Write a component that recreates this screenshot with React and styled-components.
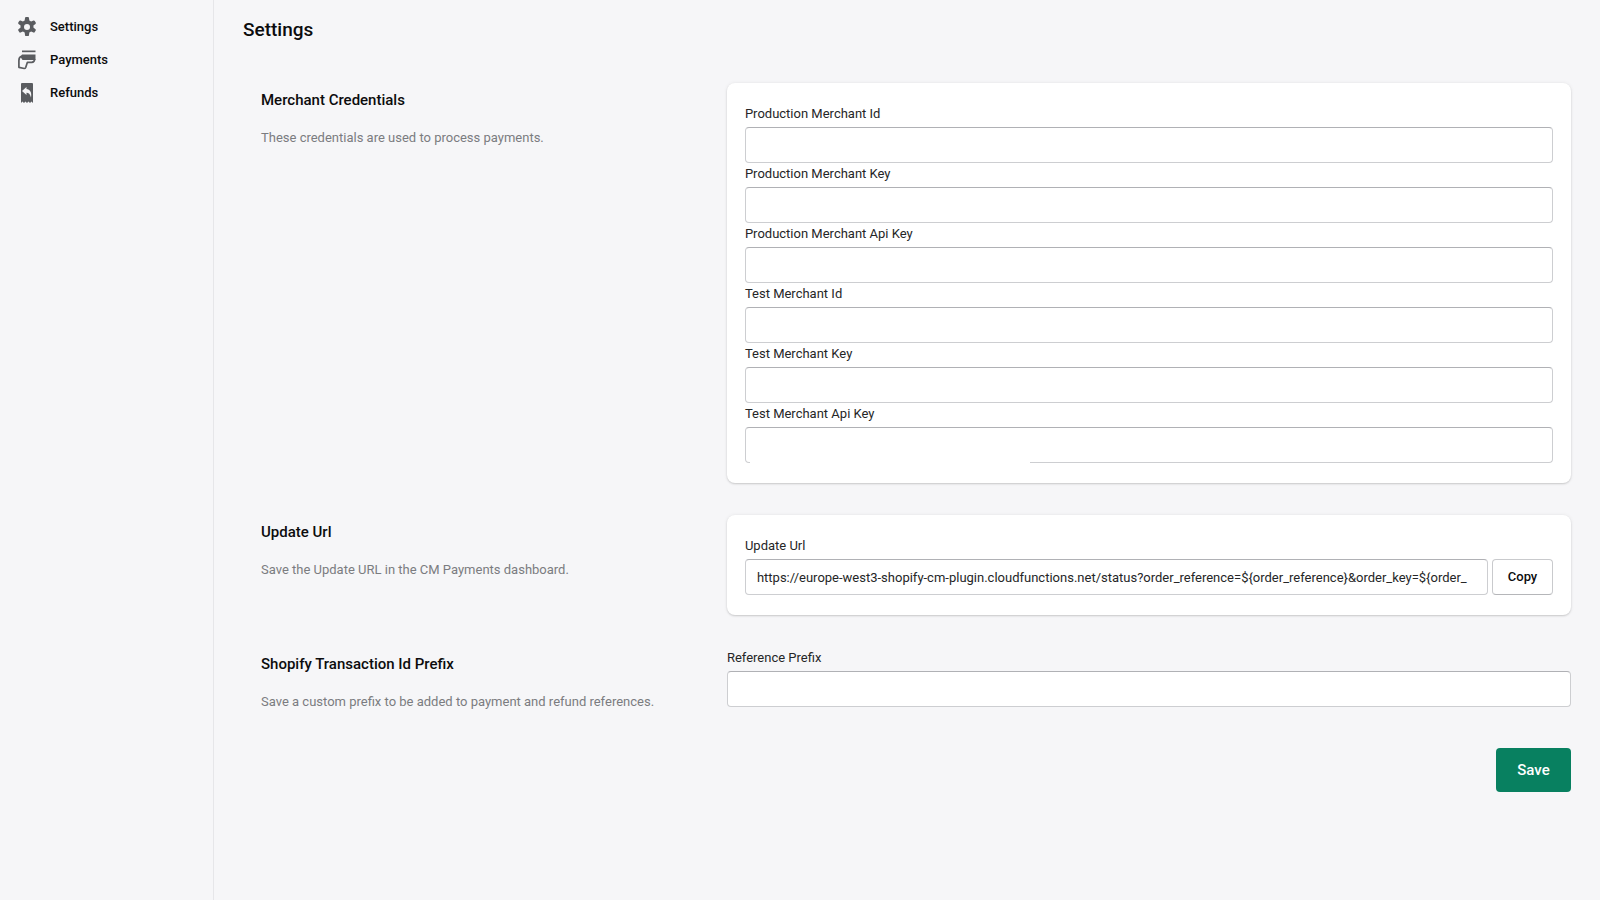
import React, { useState } from "react";
import styled, { createGlobalStyle } from "styled-components";

const NAV_ITEMS = [
  { label: "Settings", Icon: SettingsIcon },
  { label: "Payments", Icon: PaymentsIcon },
  { label: "Refunds", Icon: RefundsIcon },
];

const CREDENTIALS = [
  { id: "prodMerchantId", label: "Production Merchant Id" },
  { id: "prodMerchantKey", label: "Production Merchant Key" },
  { id: "prodMerchantApiKey", label: "Production Merchant Api Key" },
  { id: "testMerchantId", label: "Test Merchant Id" },
  { id: "testMerchantKey", label: "Test Merchant Key" },
  { id: "testMerchantApiKey", label: "Test Merchant Api Key", masked: true },
];

const UPDATE_URL =
  "https://europe-west3-shopify-cm-plugin.cloudfunctions.net/status?order_reference=${order_reference}&order_key=${order_";

function SettingsIcon() {
  return (
    <svg viewBox="0 0 20 20" aria-hidden="true">
      <path
        fillRule="evenodd"
        d="M9.027 0a1 1 0 0 0-.99.859l-.37 2.598a6.993 6.993 0 0 0-1.742 1.01l-2.437-.98a1 1 0 0 0-1.239.428l-.973 1.686a1 1 0 0 0 .25 1.286l2.067 1.62a7.067 7.067 0 0 0 0 2.013l-2.067 1.62a1 1 0 0 0-.25 1.286l.973 1.686a1 1 0 0 0 1.239.428l2.437-.98a6.993 6.993 0 0 0 1.742 1.01l.37 2.598a1 1 0 0 0 .99.859h1.946a1 1 0 0 0 .99-.859l.37-2.598a6.996 6.996 0 0 0 1.742-1.01l2.437.98a1 1 0 0 0 1.239-.428l.973-1.686a1 1 0 0 0-.25-1.286l-2.067-1.62a7.067 7.067 0 0 0 0-2.013l2.067-1.62a1 1 0 0 0 .25-1.286l-.973-1.686a1 1 0 0 0-1.239-.428l-2.437.98a6.993 6.993 0 0 0-1.742-1.01l-.37-2.598a1 1 0 0 0-.99-.859h-1.946zm.973 13a3 3 0 1 0 0-6 3 3 0 0 0 0 6z"
      />
    </svg>
  );
}

function PaymentsIcon() {
  return (
    <svg viewBox="0 0 20 20" aria-hidden="true">
      <path d="M5 .5h13.500v1.700H5z" />
      <path d="M5 4.500h13.500v5.500H5.500L3.500 7z" />
      <path
        d="M5 6C3 6.500 1.900 8 1.900 10.500v6.800l5.400 1.200q1 0 1.400-1l1.700-5.200h4.300q2.900 0 2.900-3.300"
        fill="none"
        stroke="#5a5c60"
        strokeWidth="1.700"
        strokeLinejoin="round"
      />
    </svg>
  );
}

function RefundsIcon() {
  return (
    <svg viewBox="0 0 20 20" aria-hidden="true">
      <path
        fillRule="evenodd"
        d="M5 0h10a1 1 0 0 1 1 1v19l-1.500-1.500L13 20l-1.500-1.500L10 20l-1.500-1.500L7 20l-1.500-1.500L4 20V1a1 1 0 0 1 1-1zM9.500 4 5 8l4.500 4V9.700c2.200 0 3.500 1.300 4.500 4.800 1-5-1-8.200-4.500-8.400z"
      />
    </svg>
  );
}

export default function App() {
  const [values, setValues] = useState({});

  const setValue = (id) => (e) =>
    setValues((prev) => ({ ...prev, [id]: e.target.value }));

  return (
    <>
      <GlobalStyle />
      <Layout>
        <Sidebar>
          {NAV_ITEMS.map(({ label, Icon }) => (
            <NavLink href="#" key={label}>
              <Icon />
              {label}
            </NavLink>
          ))}
        </Sidebar>

        <Main>
          <PageTitle>Settings</PageTitle>
          <Form onSubmit={(e) => e.preventDefault()}>
            <Section>
              <Annotation>
                <h2>Merchant Credentials</h2>
                <p>These credentials are used to process payments.</p>
              </Annotation>
              <Card>
                {CREDENTIALS.map(({ id, label, masked }) => (
                  <Field key={id}>
                    <Label htmlFor={id}>{label}</Label>
                    <InputWrap $masked={masked}>
                      <Input
                        id={id}
                        type="text"
                        value={values[id] ?? ""}
                        onChange={setValue(id)}
                      />
                    </InputWrap>
                  </Field>
                ))}
              </Card>
            </Section>

            <Section>
              <Annotation>
                <h2>Update Url</h2>
                <p>Save the Update URL in the CM Payments dashboard.</p>
              </Annotation>
              <Card>
                <Label htmlFor="updateUrl">Update Url</Label>
                <CopyRow>
                  <Input id="updateUrl" type="text" value={UPDATE_URL} readOnly />
                  <CopyButton
                    type="button"
                    onClick={() => navigator.clipboard?.writeText(UPDATE_URL)}
                  >
                    Copy
                  </CopyButton>
                </CopyRow>
              </Card>
            </Section>

            <Section>
              <Annotation>
                <h2>Shopify Transaction Id Prefix</h2>
                <p>Save a custom prefix to be added to payment and refund references.</p>
              </Annotation>
              <Field>
                <Label htmlFor="referencePrefix">Reference Prefix</Label>
                <Input
                  id="referencePrefix"
                  type="text"
                  value={values.referencePrefix ?? ""}
                  onChange={setValue("referencePrefix")}
                />
              </Field>
            </Section>

            <Actions>
              <SaveButton type="submit">Save</SaveButton>
            </Actions>
          </Form>
        </Main>
      </Layout>
    </>
  );
}

const GlobalStyle = createGlobalStyle`
  *, *::before, *::after {
    box-sizing: border-box;
  }

  body {
    margin: 0;
    background: #f6f6f8;
    color: #0c0c0d;
    font-family: Roboto, "Liberation Sans", sans-serif;
    font-size: 13px;
    line-height: 20px;
  }

  button, input {
    font: inherit;
    color: inherit;
  }
`;

const Layout = styled.div`
  display: flex;
  min-height: 100vh;
`;

const Sidebar = styled.nav`
  flex: 0 0 214px;
  padding: 10px 0;
  border-right: 1px solid #e6e6e9;
`;

const NavLink = styled.a`
  display: flex;
  align-items: center;
  gap: 13px;
  height: 33px;
  padding: 0 17px;
  color: #0c0c0d;
  font-weight: 500;
  text-decoration: none;

  svg {
    width: 20px;
    height: 20px;
    fill: #5a5c60;
  }
`;

const Main = styled.main`
  flex: 1;
  min-width: 0;
  padding: 16px 29px;
`;

const PageTitle = styled.h1`
  margin: 0 0 39px;
  font-size: 19px;
  font-weight: 500;
  line-height: 28px;
`;

const Form = styled.form`
  display: flex;
  flex-direction: column;
  gap: 32px;
`;

const Section = styled.section`
  display: grid;
  grid-template-columns: minmax(0, 5fr) minmax(0, 9fr);
  gap: 15px;
`;

const Annotation = styled.div`
  padding: 7px 0 0 18px;

  h2 {
    margin: 0 0 18px;
    font-size: 15px;
    font-weight: 500;
    line-height: 20px;
  }

  p {
    margin: 0;
    color: #7b7c80;
  }
`;

const Card = styled.div`
  padding: 20px 18px;
  background: #fff;
  border-radius: 8px;
  box-shadow: 0 0 4px rgba(23, 24, 24, 0.06), 0 1px 2px rgba(0, 0, 0, 0.16);
`;

const Field = styled.div`
  display: flex;
  flex-direction: column;
`;

const Label = styled.label`
  display: block;
  padding: 1px 0 3px;
  color: #252627;
`;

const Input = styled.input`
  display: block;
  width: 100%;
  min-width: 0;
  height: 36px;
  padding: 0 11px;
  background: #fff;
  border: 1px solid #cdced1;
  border-top-color: #b0b1b5;
  border-radius: 4px;
  color: #252627;
`;

const InputWrap = styled.div`
  position: relative;

  /* blank strip over the lower edge of a masked key */
  &::after {
    content: "";
    display: ${({ $masked }) => ($masked ? "block" : "none")};
    position: absolute;
    left: 5px;
    bottom: 0;
    width: 280px;
    height: 4px;
    background: #fff;
  }
`;

const CopyRow = styled.div`
  display: flex;
  gap: 4px;
`;

const CopyButton = styled.button`
  flex: 0 0 61px;
  height: 36px;
  padding: 0;
  background: #fff;
  border: 1px solid #c9cacd;
  border-bottom-color: #b5b6b9;
  border-radius: 4px;
  font-weight: 500;
  cursor: pointer;
`;

const Actions = styled.div`
  display: flex;
  justify-content: flex-end;
  padding-top: 4px;
`;

const SaveButton = styled.button`
  width: 75px;
  height: 44px;
  padding: 0;
  background: #088060;
  border: 0;
  border-radius: 4px;
  color: #fff;
  font-size: 15px;
  font-weight: 500;
  cursor: pointer;
`;
